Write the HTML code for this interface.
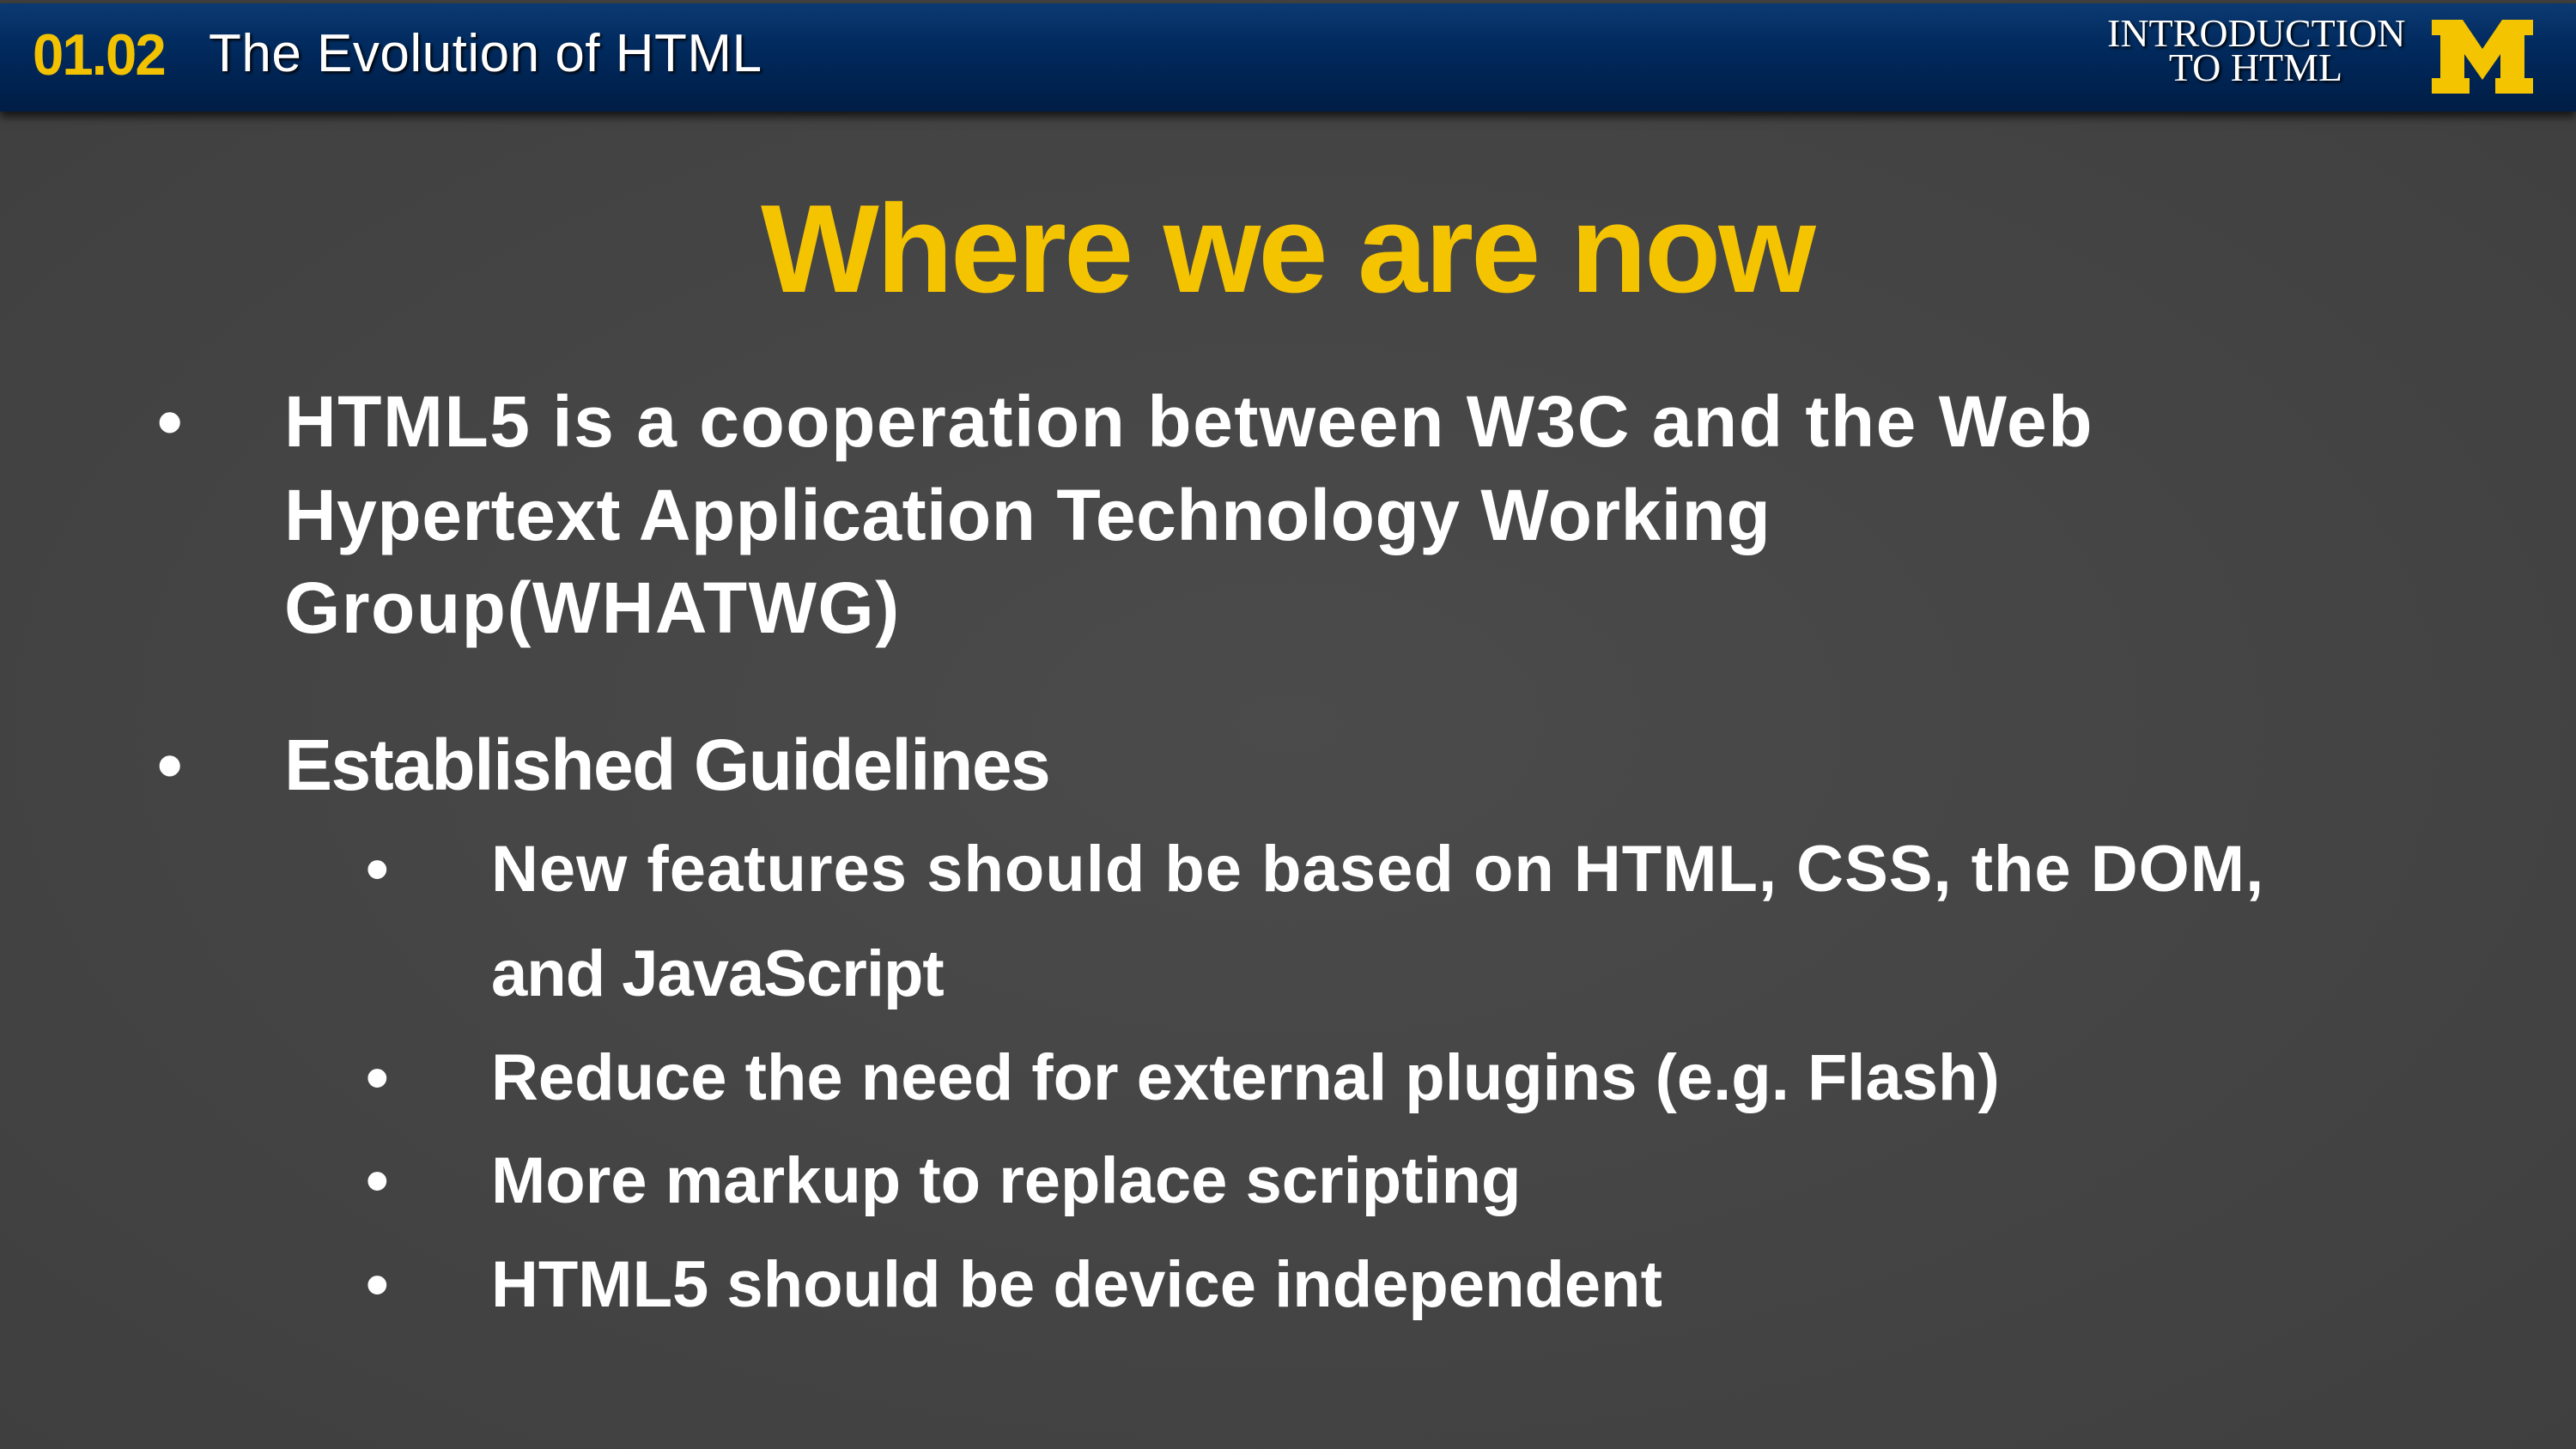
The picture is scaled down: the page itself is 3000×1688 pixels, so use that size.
<!DOCTYPE html>
<html><head><meta charset="utf-8"><style>
body{margin:0;width:3000px;height:1688px;overflow:hidden;background:#474747;font-family:"Liberation Sans",sans-serif;position:relative}
.bg{position:absolute;inset:0;background:radial-gradient(ellipse at 50% 50%,#4b4b4b,#3f3f3f)}
.hdr{position:absolute;left:0;top:4px;width:3000px;height:126px;background:linear-gradient(#0b3a72,#012a5e 40%,#001d45);box-shadow:0 6px 10px rgba(0,0,0,.7)}
.t{position:absolute;white-space:nowrap;line-height:1}
.w{color:#fff;font-weight:bold}
</style></head><body>
<div class="bg"></div>
<div class="hdr"></div>
<div class="t" style="left:38px;top:30px;font-size:68px;color:#f2c200;font-weight:bold;transform:scaleX(.96);transform-origin:left;letter-spacing:-2px">01.02</div>
<div class="t" style="left:243px;top:32px;font-size:62px;color:#fff;text-shadow:2px 2px 3px #000;letter-spacing:.5px">The Evolution of HTML</div>
<div class="t" style="left:2454px;top:19px;width:346px;text-align:center;font-family:'Liberation Serif',serif;font-size:46px;color:#fff;line-height:40px;text-shadow:2px 2px 3px #000">INTRODUCTION<br>TO HTML</div>
<svg style="position:absolute;left:2832px;top:23px" width="118" height="86" viewBox="0 0 118 86"><path d="M0 0H36L59 34L82 0H118V18H108V68H118V86H74V68H80V40L59 70L38 40V68H44V86H0V68H10V18H0Z" fill="#f5c400"/></svg>
<div class="t" style="left:886px;top:217px;font-size:146px;color:#f5c400;font-weight:bold;letter-spacing:-3px">Where we are now</div>
<div class="t w" style="left:183px;top:449px;font-size:84px">•</div>
<div class="t w" style="left:331px;top:449px;font-size:84px;letter-spacing:1.5px">HTML5 is a cooperation between W3C and the Web</div>
<div class="t w" style="left:331px;top:558px;font-size:84px;letter-spacing:0.5px">Hypertext Application Technology Working</div>
<div class="t w" style="left:331px;top:666px;font-size:84px;letter-spacing:1.5px">Group(WHATWG)</div>
<div class="t w" style="left:183px;top:849px;font-size:84px">•</div>
<div class="t w" style="left:331px;top:849px;font-size:84px;letter-spacing:-1.5px">Established Guidelines</div>
<div class="t w" style="left:426px;top:975px;font-size:76px">•</div>
<div class="t w" style="left:572px;top:975px;font-size:76px;letter-spacing:1px">New features should be based on HTML, CSS, the DOM,</div>
<div class="t w" style="left:572px;top:1097px;font-size:76px;letter-spacing:-1px">and JavaScript</div>
<div class="t w" style="left:426px;top:1218px;font-size:76px">•</div>
<div class="t w" style="left:572px;top:1218px;font-size:76px;letter-spacing:0px">Reduce the need for external plugins (e.g. Flash)</div>
<div class="t w" style="left:426px;top:1338px;font-size:76px">•</div>
<div class="t w" style="left:572px;top:1338px;font-size:76px;letter-spacing:0px">More markup to replace scripting</div>
<div class="t w" style="left:426px;top:1459px;font-size:76px">•</div>
<div class="t w" style="left:572px;top:1459px;font-size:76px;letter-spacing:0px">HTML5 should be device independent</div>
</body></html>
